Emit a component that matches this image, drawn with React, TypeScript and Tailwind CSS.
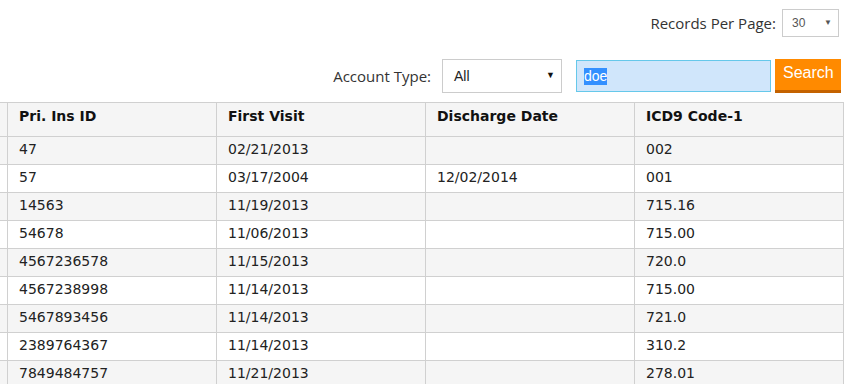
import React from "react";

const rows: [string, string, string, string][] = [
  ["47", "02/21/2013", "", "002"],
  ["57", "03/17/2004", "12/02/2014", "001"],
  ["14563", "11/19/2013", "", "715.16"],
  ["54678", "11/06/2013", "", "715.00"],
  ["4567236578", "11/15/2013", "", "720.0"],
  ["4567238998", "11/14/2013", "", "715.00"],
  ["5467893456", "11/14/2013", "", "721.0"],
  ["2389764367", "11/14/2013", "", "310.2"],
  ["7849484757", "11/21/2013", "", "278.01"],
];

const headers = ["Pri. Ins ID", "First Visit", "Discharge Date", "ICD9 Code-1"];

export default function App() {
  return (
    <div className="w-[844px] h-[384px] overflow-hidden bg-white">
      <div className="flex justify-end items-center pt-[9px] pr-[5px]">
        <span className="text-[15px] text-[#333] mr-[6px] leading-[20px]" style={{ fontFamily: '"Open Sans", "Liberation Sans", sans-serif' }}>
          Records Per Page:
        </span>
        <div className="w-[57px] h-[28px] border border-[#ccc] flex items-center justify-between pl-[9px] pr-[6px]" style={{ fontFamily: '"Liberation Sans", Arial, sans-serif' }}>
          <span className="text-[12px] text-[#555]">30</span>
          <span className="text-[8px] text-[#555]">▼</span>
        </div>
      </div>
      <div className="flex justify-end items-center mt-[22px] pr-[3px]">
        <span className="text-[15px] text-[#333] mr-[11px] leading-[20px]" style={{ fontFamily: '"Open Sans", "Liberation Sans", sans-serif' }}>
          Account Type:
        </span>
        <div className="w-[120px] h-[34px] border border-[#ccc] flex items-center justify-between pl-[11px] pr-[6px] mr-[14px]" style={{ fontFamily: '"Liberation Sans", Arial, sans-serif' }}>
          <span className="text-[14px] text-[#222]">All</span>
          <span className="text-[9px] text-[#111]">▼</span>
        </div>
        <div className="w-[195px] h-[32px] border border-[#66c8ea] bg-[#d0e6fb] flex items-center pl-[7px] mr-[4px]" style={{ fontFamily: '"Liberation Sans", Arial, sans-serif' }}>
          <span className="text-[14px] bg-[#3390ff] text-white leading-[17px]">doe</span>
        </div>
        <div className="w-[66px] h-[34px] bg-[#ff8a00] border-b-[3px] border-[#c46200] text-white text-[16px] pl-[8px] pt-[4px] leading-[20px]" style={{ fontFamily: '"Liberation Sans", Arial, sans-serif' }}>
          Search
        </div>
      </div>
      <div
        className="mt-[9px] grid grid-cols-[7px_209px_209px_209px_210px] text-[14px]"
        style={{ fontFamily: '"DejaVu Sans", Verdana, sans-serif' }}
      >
        <div className="h-[35px] bg-[#f5f5f5] border-t border-b border-[#d0d0d0]" />
        {headers.map((h, i) => (
          <div
            key={h}
            className={`h-[35px] bg-[#f5f5f5] border-t border-b border-l border-[#d0d0d0] pl-[11px] pt-[4px] leading-[18px] font-bold text-[#111] ${i === 3 ? "border-r" : ""}`}
          >
            {h}
          </div>
        ))}
        {rows.map((r, ri) => {
          const bg = ri % 2 === 0 ? "bg-[#f5f5f5]" : "bg-white";
          return (
            <React.Fragment key={ri}>
              <div className={`h-[28px] border-b border-[#d0d0d0] ${bg}`} />
              {r.map((c, ci) => (
                <div
                  key={ci}
                  className={`h-[28px] border-b border-l border-[#d0d0d0] pl-[11px] pt-[3px] leading-[18px] text-[#222] ${bg} ${ci === 3 ? "border-r" : ""}`}
                >
                  {c}
                </div>
              ))}
            </React.Fragment>
          );
        })}
      </div>
    </div>
  );
}
